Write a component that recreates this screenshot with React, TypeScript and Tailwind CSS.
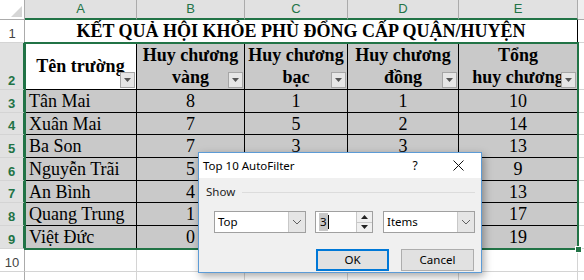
import React from "react";

const HEADS: string[][] = [
  ["Tên trường"],
  ["Huy chương", "vàng"],
  ["Huy chương", "bạc"],
  ["Huy chương", "đồng"],
  ["Tổng", "huy chương"],
];

// C/D for rows 6-9 sit under the dialog, left blank
const ROWS: (string | number)[][] = [
  ["Tân Mai", 8, 1, 1, 10],
  ["Xuân Mai", 7, 5, 2, 14],
  ["Ba Son", 7, 3, 3, 13],
  ["Nguyễn Trãi", 5, "", "", 9],
  ["An Bình", 4, "", "", 13],
  ["Quang Trung", 1, "", "", 17],
  ["Việt Đức", 0, "", "", 19],
];

const ROW_H = ["h-[23px]", "h-[22px]", "h-[23px]", "h-[23px]", "h-[22px]", "h-[23px]", "h-[23px]"];
const COL_W = ["w-[112px]", "w-[108px]", "w-[103px]", "w-[111px]", "w-[119px]"];

function FilterButton() {
  return (
    <div className="absolute right-[1px] bottom-[1px] w-[15px] h-[16px] border border-[#a6a6a6] bg-[#e6e6e6] flex items-center justify-center">
      <svg width="7" height="4" viewBox="0 0 7 4">
        <path d="M0 0h7L3.5 4z" fill="#555" />
      </svg>
    </div>
  );
}

function RowHeader({ n, h, sel }: { n: number; h: string; sel: boolean }) {
  return (
    <div
      className={`w-[25px] ${h} shrink-0 flex items-end justify-center pb-[2px] text-[13px] leading-none font-['Liberation_Sans',sans-serif] border-b border-[#d4d4d4] ${
        sel
          ? "bg-[#e1e1e1] text-[#217346] font-bold border-r-2 border-r-[#217346]"
          : "bg-white text-[#444] border-r border-r-[#ababab]"
      }`}
    >
      {n}
    </div>
  );
}

function Chevron() {
  return (
    <svg width="10" height="6" viewBox="0 0 10 6">
      <path d="M1 1l4 4 4-4" fill="none" stroke="#606060" strokeWidth="1" />
    </svg>
  );
}

function Combo({ label }: { label: string }) {
  return (
    <div className="w-[92px] h-[22px] border border-[#a0a0a0] bg-white flex">
      <div className="flex-1 flex items-center pl-[3px]">{label}</div>
      <div className="w-[17px] bg-[#e5e5e5] border-l border-[#c8c8c8] flex items-center justify-center">
        <Chevron />
      </div>
    </div>
  );
}

function Dialog() {
  return (
    <div className="absolute left-[198px] top-[152px] w-[284px] h-[121px] border border-[#5c9bd6] bg-[#f0f0f0] flex flex-col shadow-[2px_3px_8px_rgba(0,0,0,0.35)] font-['Noto_Sans',sans-serif] text-[11.5px] text-black">
      <div className="h-[25px] bg-white flex items-center pl-[4px]">
        <span className="flex-1">Top 10 AutoFilter</span>
        <span className="w-[20px] text-center mr-[28px] text-[12px]">?</span>
        <svg width="11" height="11" viewBox="0 0 11 11" className="mr-[17px]">
          <path d="M0.5 0.5l10 10M10.5 0.5l-10 10" stroke="#111" strokeWidth="1" />
        </svg>
      </div>
      <div className="flex-1 flex flex-col px-[6px] pt-[7px]">
        <div className="flex items-center h-[14px] pl-[1px] gap-[7px]">
          <span className="text-[#222]">Show</span>
          <div className="flex-1 h-px bg-[#dcdcdc]" />
        </div>
        <div className="flex items-center mt-[12px] pl-[9px] gap-[9px]">
          <Combo label="Top" />
          <div className="w-[58px] h-[22px] border border-[#a0a0a0] bg-white flex">
            <div className="flex-1 flex items-center pl-[3px]">
              <span className="bg-[#c8c8c8] px-[1px]">3</span>
              <span className="w-px h-[14px] bg-black" />
            </div>
            <div className="w-[16px] flex flex-col bg-[#f0f0f0] border-l border-[#c8c8c8]">
              <div className="flex-1 flex items-center justify-center border-b border-[#c8c8c8]">
                <svg width="7" height="4" viewBox="0 0 7 4">
                  <path d="M0 4h7L3.5 0z" fill="#222" />
                </svg>
              </div>
              <div className="flex-1 flex items-center justify-center">
                <svg width="7" height="4" viewBox="0 0 7 4">
                  <path d="M0 0h7L3.5 4z" fill="#222" />
                </svg>
              </div>
            </div>
          </div>
          <div className="ml-[1px]">
            <Combo label="Items" />
          </div>
        </div>
        <div className="flex justify-end gap-[12px] mt-[16px] pr-[1px]">
          <div className="w-[73px] h-[22px] border-2 border-[#0078d7] bg-[#e1e1e1] flex items-center justify-center">
            OK
          </div>
          <div className="w-[73px] h-[22px] border border-[#adadad] bg-[#e1e1e1] flex items-center justify-center">
            Cancel
          </div>
        </div>
      </div>
    </div>
  );
}

export default function App() {
  return (
    <div className="relative w-[584px] h-[280px] overflow-hidden bg-white font-['Liberation_Serif',serif] text-black">
      {/* column headers */}
      <div className="flex h-[20px]">
        <div className="w-[25px] shrink-0 bg-white border-r border-b border-[#ababab] flex items-end justify-end p-[2px]">
          <svg width="11" height="11" viewBox="0 0 11 11">
            <path d="M11 0v11H0z" fill="#d6d6d6" />
          </svg>
        </div>
        {["A", "B", "C", "D", "E"].map((c, i) => (
          <div
            key={c}
            className={`${COL_W[i]} shrink-0 bg-[#e1e1e1] border-r border-[#ababab] border-b-2 border-b-[#217346] flex items-center justify-center text-[13px] text-[#217346] font-['Liberation_Sans',sans-serif]`}
          >
            {c}
          </div>
        ))}
        <div className="flex-1 bg-[#efefef] border-b border-[#ababab]" />
      </div>

      {/* row 1 */}
      <div className="flex h-[23px]">
        <RowHeader n={1} h="h-[23px]" sel={false} />
        <div className="w-[553px] shrink-0 border-r border-b border-black flex items-center justify-center text-[18px] font-bold leading-none">
          KẾT QUẢ HỘI KHỎE PHÙ ĐỔNG CẤP QUẬN/HUYỆN
        </div>
        <div className="flex-1 border-b border-[#d4d4d4]" />
      </div>

      {/* row 2 */}
      <div className="flex h-[47px]">
        <RowHeader n={2} h="h-[47px]" sel />
        {HEADS.map((lines, i) => (
          <div
            key={i}
            className={`relative ${COL_W[i]} shrink-0 border-r border-b border-black ${
              i === 0 ? "bg-white" : "bg-[#c9c9c9]"
            } flex flex-col items-center justify-center text-[18px] font-bold leading-[22px]`}
          >
            {lines.map((l) => (
              <div key={l} className="whitespace-nowrap">
                {l}
              </div>
            ))}
            <FilterButton />
          </div>
        ))}
        <div className="flex-1 border-b border-[#d4d4d4]" />
      </div>

      {/* data rows */}
      {ROWS.map((r, ri) => (
        <div key={r[0]} className={`flex ${ROW_H[ri]}`}>
          <RowHeader n={ri + 3} h={ROW_H[ri]} sel />
          {r.map((v, ci) => (
            <div
              key={ci}
              className={`${COL_W[ci]} shrink-0 bg-[#c9c9c9] border-r border-b border-black flex items-center text-[18px] leading-none ${
                ci === 0 ? "justify-start pl-[4px]" : "justify-center"
              }`}
            >
              {v}
            </div>
          ))}
          <div className="flex-1 border-b border-[#d4d4d4]" />
        </div>
      ))}

      {/* empty rows */}
      {[10, 11].map((n) => (
        <div key={n} className="flex h-[23px]">
          <RowHeader n={n} h="h-[23px]" sel={false} />
          {COL_W.map((w, i) => (
            <div key={i} className={`${w} shrink-0 border-r border-b border-[#d4d4d4]`} />
          ))}
          <div className="flex-1 border-b border-[#d4d4d4]" />
        </div>
      ))}

      {/* selection border A2:E9 */}
      <div className="absolute left-[24px] top-[42px] w-[555px] h-[208px] border-2 border-[#217346] pointer-events-none" />
      <div className="absolute left-[575px] top-[246px] w-[7px] h-[7px] bg-[#217346] border border-white" />

      <Dialog />
    </div>
  );
}
